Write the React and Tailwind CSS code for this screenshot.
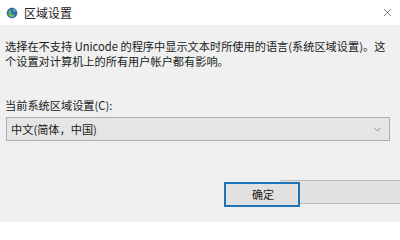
import { ChevronDown, X } from 'lucide-react';

const GlobeIcon = () => (
  <svg width="12" height="13" viewBox="0 0 12 13">
    <circle cx="6" cy="7" r="5" fill="#2f6fb8" />
    <path d="M3 4.5 C4.5 3.5 6 5 5 6.5 C4 8 6 9 7.5 8 L8.5 10 C7 11.5 4 11.5 2.5 9.5 Z" fill="#6cbf4a" />
    <path d="M7 3 C8.5 2.5 10 4 9.5 5.5 L8 5 Z" fill="#8fd36b" />
    <circle cx="6" cy="7" r="5" fill="none" stroke="#1d4f8c" strokeWidth="0.6" />
  </svg>
);

const App = () => {
  return (
    <div
      className="w-[400px] h-[222px] overflow-hidden bg-[#f0f0f0] text-[#1a1a1a] text-[11.2px]"
      style={{ fontFamily: '"Noto Sans CJK SC", "Noto Sans", sans-serif' }}
    >
      <div className="h-[25px] bg-white flex items-center pl-[6px] pr-[6px]">
        <GlobeIcon />
        <span className="ml-[6px] text-[12px] text-[#222]">区域设置</span>
        <X className="ml-auto mr-0 text-[#333]" size={13} strokeWidth={1.2} />
      </div>

      <div className="px-[5px] pt-[14px] leading-[15px]">
        <div>选择在不支持 Unicode 的程序中显示文本时所使用的语言(系统区域设置)。这</div>
        <div>个设置对计算机上的所有用户帐户都有影响。</div>
      </div>

      <div className="px-[5px] mt-[29px] leading-[15px]">当前系统区域设置(C):</div>

      <div className="ml-[6px] mr-[10px] mt-[4px] h-[24px] border border-[#adadad] bg-[#e5e5e5] flex items-center pl-[4px] pr-[6px]">
        <span>中文(简体，中国)</span>
        <ChevronDown className="ml-auto text-[#555]" size={11} strokeWidth={1.4} />
      </div>

      <div className="relative mt-[41px] ml-[224px] h-[25px]">
        <div className="absolute left-[56px] top-[-2px] w-[130px] h-[24px] bg-[#e1e1e1] border border-[#bdbdbd]"></div>
        <div className="absolute left-0 top-0 w-[76px] h-[25px] bg-[#e1e1e1] border-2 border-[#1f73b7] flex items-center pl-[26px]">
          <span className="text-[11px]">确定</span>
        </div>
      </div>
    </div>
  );
};

export default App;
